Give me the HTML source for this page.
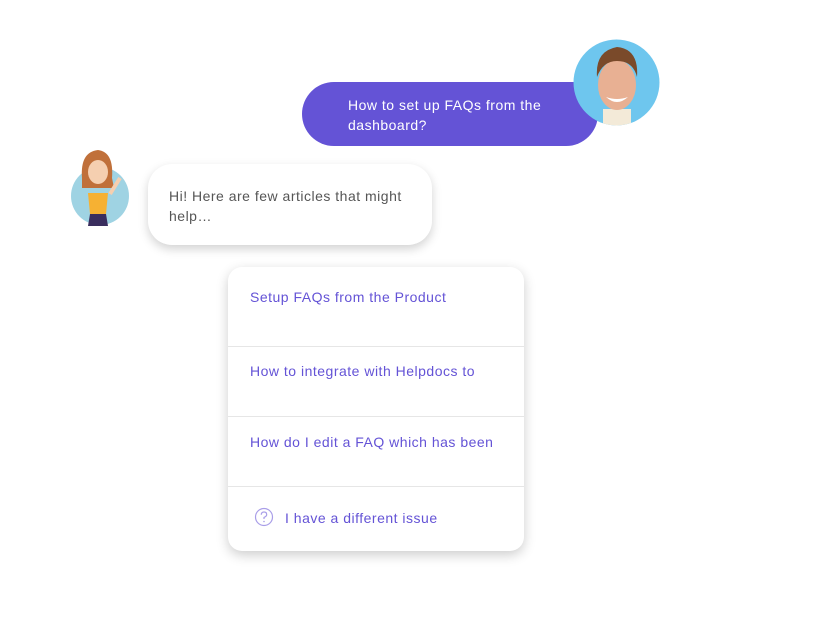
<!DOCTYPE html>
<html><head><style>
body{margin:0;width:816px;height:618px;background:#fff;position:relative;overflow:hidden;font-family:"Liberation Sans",sans-serif;}
.a{position:absolute}
.t{font-size:14px;line-height:20px;letter-spacing:0.5px}
.item{position:absolute;left:22px;color:#6453d6;font-size:14px;letter-spacing:0.5px}
.hr{position:absolute;left:0;right:0;height:1px;background:#e6e6e6}
</style></head><body>
<div class="a" style="left:302px;top:82px;width:296px;height:64px;background:#6453d6;border-radius:32px 14px 32px 32px"></div>
<div class="a t" style="left:348px;top:95px;color:#fff;width:220px">How to set up FAQs from the dashboard?</div>
<svg class="a" style="left:573px;top:39px" width="87" height="87" viewBox="0 0 87 87">
<defs><clipPath id="c"><circle cx="43.5" cy="43.5" r="43"/></clipPath></defs>
<circle cx="43.5" cy="43.5" r="43" fill="#6ec6ee"/>
<g clip-path="url(#c)">
<rect x="30" y="70" width="28" height="20" fill="#f3ead8"/>
<ellipse cx="44" cy="46" rx="19" ry="25" fill="#e8b093"/>
<path d="M24 38 Q22 12 44 8 Q66 10 64 38 Q60 22 44 22 Q30 22 24 38Z" fill="#7a4a2a"/>
<path d="M33 58 Q44 68 55 58 Q44 62 33 58Z" fill="#fff"/>
</g></svg>
<div class="a" style="left:148px;top:164px;width:284px;height:81px;background:#fff;border-radius:24px;box-shadow:0 4px 10px rgba(0,0,0,0.18)"></div>
<div class="a t" style="left:169px;top:186px;color:#555;width:255px">Hi! Here are few articles that might help…</div>
<svg class="a" style="left:68px;top:148px" width="64" height="80" viewBox="0 0 64 80">
<circle cx="32" cy="48" r="29" fill="#9fd3e3"/>
<path d="M14 30 Q12 4 30 2 Q46 4 44 30 L46 40 L14 40Z" fill="#c0703a"/>
<ellipse cx="30" cy="24" rx="10" ry="12" fill="#f5cfb0"/>
<path d="M20 45 L40 45 L38 66 L22 66Z" fill="#f6b133"/>
<path d="M22 66 L38 66 L40 78 L20 78Z" fill="#3a2e5e"/>
<path d="M42 46 L52 30" stroke="#f5cfb0" stroke-width="4"/>
</svg>
<div class="a" style="left:228px;top:267px;width:296px;height:284px;background:#fff;border-radius:14px;box-shadow:0 4px 12px rgba(0,0,0,0.2)">
<div class="item" style="top:22px">Setup FAQs from the Product</div>
<div class="hr" style="top:79px"></div>
<div class="item" style="top:96px">How to integrate with Helpdocs to</div>
<div class="hr" style="top:149px"></div>
<div class="item" style="top:167px">How do I edit a FAQ which has been</div>
<div class="hr" style="top:219px"></div>
<svg class="a" style="left:26px;top:240px" width="20" height="20" viewBox="0 0 20 20"><circle cx="10" cy="10" r="8.5" fill="none" stroke="#a99ee8" stroke-width="1.2"/><path d="M7.3 7.8 Q7.3 5 10 5 Q12.7 5 12.7 7.6 Q12.7 9.2 10 10.4 L10 12" fill="none" stroke="#a99ee8" stroke-width="1.2"/><circle cx="10" cy="14.5" r="0.8" fill="#a99ee8"/></svg>
<div class="item" style="top:243px;left:57px">I have a different issue</div>
</div>
</body></html>
